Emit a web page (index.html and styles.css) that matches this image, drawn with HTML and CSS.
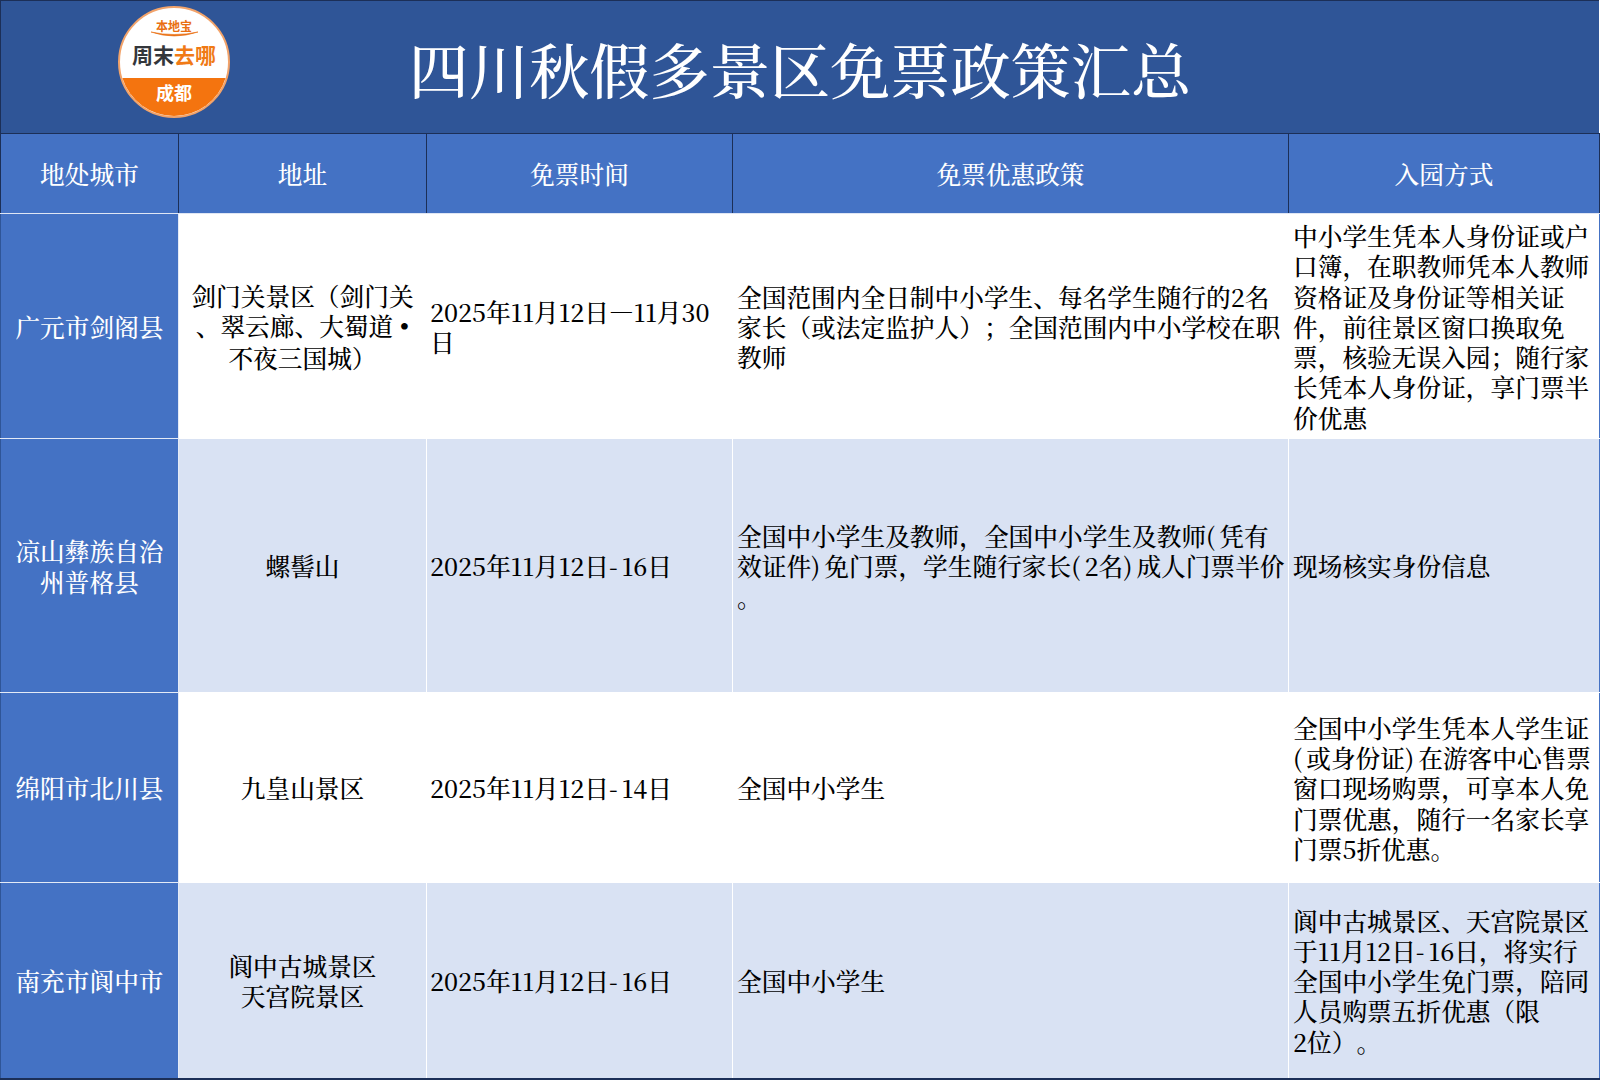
FILE: index.html
```html
<!DOCTYPE html>
<html lang="zh-CN">
<head>
<meta charset="utf-8">
<title>四川秋假多景区免票政策汇总</title>
<link rel="stylesheet" href="styles.css">
</head>
<body>
<div class="sheet">
  <header class="banner">
    <svg class="logo" viewBox="0 0 120 120" width="120" height="120" aria-label="logo">
      <circle class="logo-face" cx="60" cy="60" r="55"/>
      <path class="logo-band" d="M8.4 76 A54 54 0 0 0 111.6 76 Z"/>
      <text class="logo-brand" x="60" y="29" text-anchor="middle">本地宝</text>
      <path class="logo-swoosh" d="M37 30 Q60 38 84 30 Q60 35 37 30 Z"/>
      <text class="logo-name" x="60" y="61" text-anchor="middle"><tspan class="logo-dark">周末</tspan><tspan class="logo-orange">去哪</tspan></text>
      <text class="logo-city" x="60" y="98" text-anchor="middle">成都</text>
    </svg>
    <h1 class="title">四川秋假多景区免票政策汇总</h1>
  </header>
  <table class="grid">
    <colgroup>
      <col class="c1"><col class="c2"><col class="c3"><col class="c4"><col class="c5">
    </colgroup>
    <thead>
      <tr class="r-head"><th>地处城市</th><th>地址</th><th>免票时间</th><th>免票优惠政策</th><th>入园方式</th></tr>
    </thead>
    <tbody>
      <tr class="r1">
        <th scope="row">广元市剑阁县</th>
        <td class="mid">剑门关景区（剑门关<br>、翠云廊、大蜀道 <span class="dot">•</span><br>不夜三国城）</td>
        <td class="date">2025年11月12日—11月30<br>日</td>
        <td class="text">全国范围内全日制中小学生、每名学生随行的2名<br>家长（或法定监护人）；全国范围内中小学校在职<br>教师</td>
        <td class="text">中小学生凭本人身份证或户<br>口簿，在职教师凭本人教师<br>资格证及身份证等相关证<br>件，前往景区窗口换取免<br>票，核验无误入园；随行家<br>长凭本人身份证，享门票半<br>价优惠</td>
      </tr>
      <tr class="r2 alt">
        <th scope="row">凉山彝族自治<br>州普格县</th>
        <td class="mid">螺髻山</td>
        <td class="date">2025年11月12日<span class="wide">-</span>16日</td>
        <td class="text">全国中小学生及教师，全国中小学生及教师<span class="wide">(</span>凭有<br>效证件<span class="wide">)</span>免门票，学生随行家长<span class="wide">(</span>2名<span class="wide">)</span>成人门票半价<br>。</td>
        <td class="text">现场核实身份信息</td>
      </tr>
      <tr class="r3">
        <th scope="row">绵阳市北川县</th>
        <td class="mid">九皇山景区</td>
        <td class="date">2025年11月12日<span class="wide">-</span>14日</td>
        <td class="text">全国中小学生</td>
        <td class="text">全国中小学生凭本人学生证<br><span class="wide">(</span>或身份证<span class="wide">)</span>在游客中心售票<br>窗口现场购票，可享本人免<br>门票优惠，随行一名家长享<br>门票5折优惠。</td>
      </tr>
      <tr class="r4 alt">
        <th scope="row">南充市阆中市</th>
        <td class="mid">阆中古城景区<br>天宫院景区</td>
        <td class="date">2025年11月12日<span class="wide">-</span>16日</td>
        <td class="text">全国中小学生</td>
        <td class="text">阆中古城景区、天宫院景区<br>于11月12日<span class="wide">-</span>16日，将实行<br>全国中小学生免门票，陪同<br>人员购票五折优惠（限<br>2位）。</td>
      </tr>
    </tbody>
  </table>
</div>
</body>
</html>
```

FILE: styles.css
```css
* { box-sizing: border-box; }
html, body { margin: 0; padding: 0; background: #fff; }
body {
  width: 1600px;
  height: 1080px;
  overflow: hidden;
  font-family: "Noto Serif CJK SC", "Noto Sans CJK SC", serif;
  text-spacing-trim: space-all;
  color: #000;
}
.sheet { width: 1599px; display: flex; flex-direction: column; }
.banner {
  position: relative;
  height: 133px;
  padding-top: 2px;
  background: #2f5597;
  border-top: 1px solid #1c2f57;
  border-left: 1px solid #1c2f57;
  display: flex;
  align-items: center;
  justify-content: center;
}
.title {
  margin: 0;
  font-size: 60.2px;
  line-height: 70px;
  font-weight: 500;
  color: #fff;
}
.logo { position: absolute; left: 113px; top: 1px; }
.logo-face { fill: #fff; stroke: #f2a36a; stroke-width: 2; }
.logo-band { fill: #f4740f; }
.logo-brand { font-size: 12px; font-weight: 700; fill: #e96f12; font-family: "Noto Sans CJK SC", sans-serif; }
.logo-swoosh { fill: #e96f12; stroke: #e96f12; stroke-width: .6; }
.logo-name { font-size: 21px; font-weight: 700; font-family: "Noto Sans CJK SC", sans-serif; }
.logo-dark { fill: #33363b; }
.logo-orange { fill: #f07a16; }
.logo-city { font-size: 18px; font-weight: 700; fill: #fff; font-family: "Noto Sans CJK SC", sans-serif; }

.grid {
  width: 1599px;
  table-layout: fixed;
  border-collapse: collapse;
  font-size: 24.7px;
  line-height: 30.3px;
}
.c1 { width: 178px; }
.c2 { width: 248px; }
.c3 { width: 306px; }
.c4 { width: 556px; }
.c5 { width: 311px; }
.r-head { height: 80px; }
.r1 { height: 225px; }
.r2 { height: 254px; }
.r3 { height: 190px; }
.r4 { height: 196px; }
th, td { padding: 2px 0 0; vertical-align: middle; }
th { font-weight: 500; text-align: center; color: #fff; background: #4472c4; }
thead th { border: 1px solid #1c2f57; border-bottom-color: #dfe6f4; }
tbody th { border: 1px solid #e4eaf6; border-left-color: #2f5597; }
td { font-weight: 500; white-space: nowrap; border: 1px solid #fff; }
tbody tr:last-child th,
tbody tr:last-child td { border-bottom: 2px solid #1c2f57; }
tbody td:last-child { border-right: 1px solid #4472c4; }
.alt td { background: #d9e2f3; }
.mid { text-align: center; }
.date { padding-left: 3px; }
.text { padding-left: 4px; }
.wide { letter-spacing: 4px; }
.dot { font-family: "Liberation Serif", serif; font-size: 28px; }
```
